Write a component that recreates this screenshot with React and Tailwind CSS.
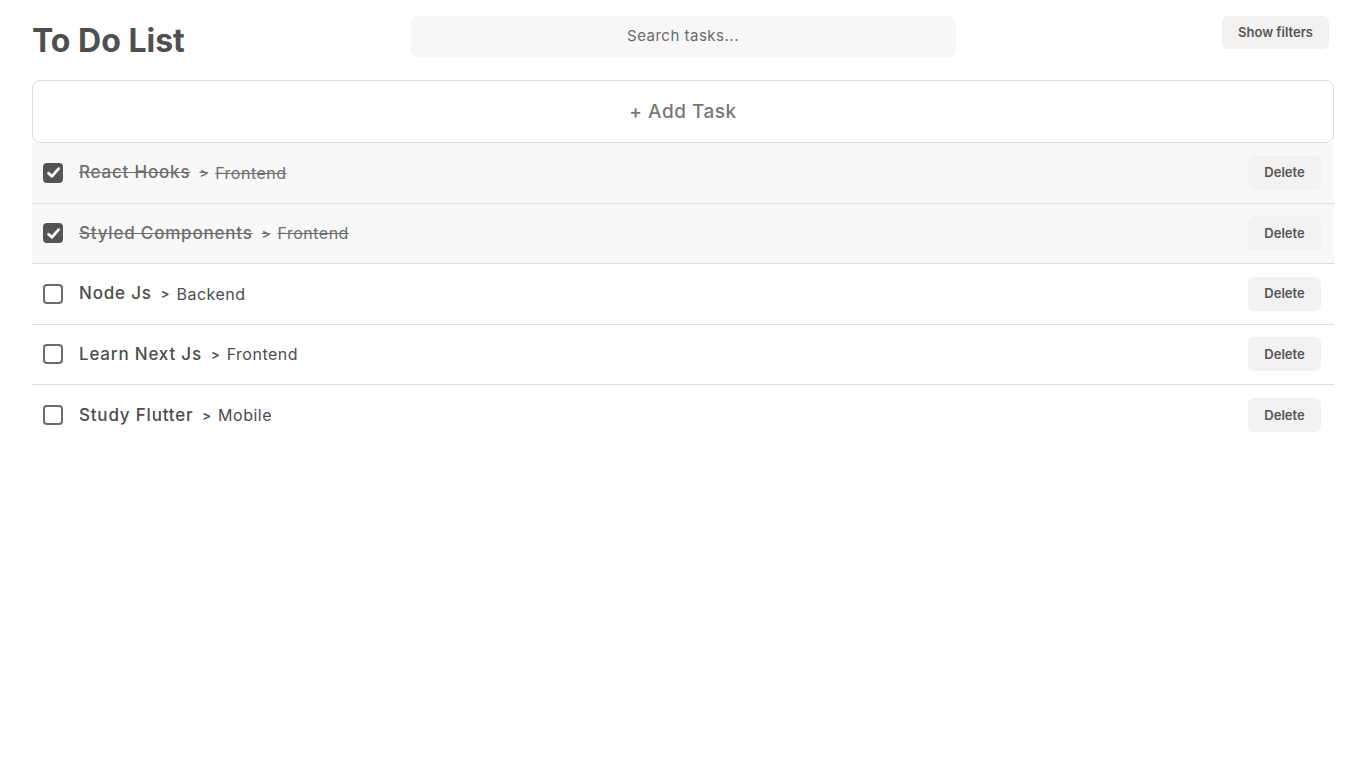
import React, { useState } from 'react';

const INITIAL = [
  { id: 1, title: 'React Hooks', category: 'Frontend', done: true },
  { id: 2, title: 'Styled Components', category: 'Frontend', done: true },
  { id: 3, title: 'Node Js', category: 'Backend', done: false },
  { id: 4, title: 'Learn Next Js', category: 'Frontend', done: false },
  { id: 5, title: 'Study Flutter', category: 'Mobile', done: false },
];

function Checkbox({ checked, onChange }) {
  return (
    <button
      onClick={onChange}
      className={`w-5 h-5 shrink-0 rounded-[4px] flex items-center justify-center border-2 ${
        checked ? 'bg-[#545454] border-[#545454]' : 'bg-white border-[#6b6b6b]'
      }`}
    >
      {checked && (
        <svg width="15" height="15" viewBox="0 0 14 14" fill="none">
          <path d="M2.4 7.6 5.5 10.6 11.8 3.4" stroke="white" strokeWidth="2.6" strokeLinecap="round" strokeLinejoin="round" />
        </svg>
      )}
    </button>
  );
}

function TaskRow({ task, last, onToggle, onDelete }) {
  return (
    <div
      className={`h-[60.5px] flex items-center pl-[11px] pr-[13px] ${task.done ? 'bg-[#f8f8f8]' : 'bg-white'} ${
        last ? '' : 'border-b border-[#dedede]'
      }`}
    >
      <Checkbox checked={task.done} onChange={onToggle} />
      <div className={`ml-4 flex items-center ${task.done ? 'line-through text-[#6e6e6e]' : 'text-[#4d4d4d]'}`}>
        <span className="text-[17px] font-medium tracking-[0.8px]">{task.title}</span>
        <span className="ml-[9px] mr-[7px] text-[13px] font-semibold">&gt;</span>
        <span className="text-[16px] tracking-[0.5px]">{task.category}</span>
      </div>
      <button
        onClick={onDelete}
        className="ml-auto w-[73px] h-[34px] rounded-md bg-[#f2f2f2] text-[13px] font-semibold text-[#555]"
      >
        Delete
      </button>
    </div>
  );
}

export default function App() {
  const [tasks, setTasks] = useState(INITIAL);

  const toggle = id => setTasks(ts => ts.map(t => (t.id === id ? { ...t, done: !t.done } : t)));
  const remove = id => setTasks(ts => ts.filter(t => t.id !== id));

  return (
    <div className="min-h-screen bg-white pl-8 pr-[31px] pt-4 font-['Inter',sans-serif] text-[#4d4d4d]">
      <div className="grid grid-cols-[1fr_546px_1fr] items-start h-16">
        <h1 className="text-[32px] leading-[50px] font-bold text-[#4f4f4f]">To Do List</h1>
        <div className="h-[41px] rounded-lg bg-[#f7f7f7] flex items-center justify-center text-[15px] tracking-[0.5px] text-[#6a6a6a]">
          Search tasks...
        </div>
        <div className="flex justify-end pr-[5px]">
          <button className="w-[107px] h-[33px] rounded-md bg-[#f2f2f2] text-[13px] font-semibold text-[#555]">
            Show filters
          </button>
        </div>
      </div>

      <button className="w-full h-[63px] rounded-lg border border-[#dcdcdc] bg-white pt-[2px] text-[19px] font-medium tracking-[0.5px] text-[#777]">
        + Add Task
      </button>

      <div>
        {tasks.map((t, i) => (
          <TaskRow
            key={t.id}
            task={t}
            last={i === tasks.length - 1}
            onToggle={() => toggle(t.id)}
            onDelete={() => remove(t.id)}
          />
        ))}
      </div>
    </div>
  );
}
